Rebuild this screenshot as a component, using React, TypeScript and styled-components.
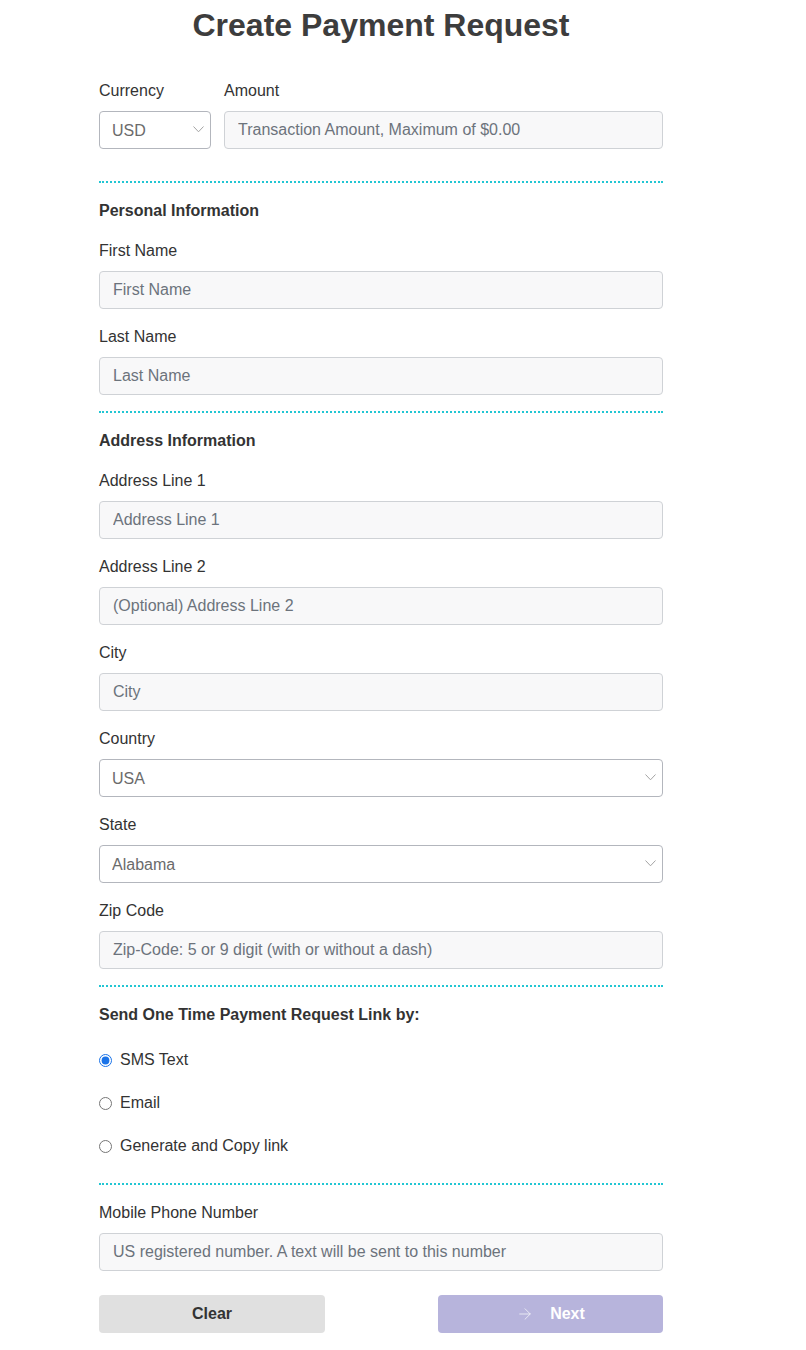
import React, { useState } from "react";
import styled, { createGlobalStyle } from "styled-components";
import { ArrowRight } from "lucide-react";

const GlobalStyle = createGlobalStyle`
  body {
    margin: 0;
    background: #ffffff;
    font-family: "Liberation Sans", Arial, Helvetica, sans-serif;
    color: #333333;
  }
`;

const Page = styled.div`
  width: 564px;
  margin: 0 0 0 99px;
  padding-bottom: 17px;
`;

const Title = styled.h1`
  margin: 6px 0 0;
  font-size: 32px;
  line-height: 38px;
  font-weight: 700;
  text-align: center;
  color: #3d3d3d;
`;

const TopRow = styled.div`
  display: flex;
  gap: 13px;
  margin-top: 35px;
  margin-bottom: 32px;
`;

const Field = styled.div<{ width?: string; grow?: boolean }>`
  display: flex;
  flex-direction: column;
  width: ${(p) => p.width || "auto"};
  flex: ${(p) => (p.grow ? 1 : "none")};
  margin-bottom: ${(p) => (p.width || p.grow ? "0" : "16px")};
`;

const Label = styled.label`
  font-size: 16px;
  line-height: 22px;
  padding-top: 1px;
  color: #333333;
  margin-bottom: 9px;
`;

const Input = styled.input`
  box-sizing: border-box;
  width: 100%;
  height: 38px;
  padding: 0 13px;
  border: 1px solid #cfd2d6;
  border-radius: 4px;
  background: #f8f8f9;
  font-family: "Liberation Sans", Arial, sans-serif;
  font-size: 16px;
  color: #333;
  outline: none;

  &::placeholder {
    color: #6c737c;
  }
`;

const SelectWrap = styled.div`
  position: relative;
  width: 100%;
`;

const Select = styled.select`
  box-sizing: border-box;
  width: 100%;
  height: 38px;
  padding: 0 30px 0 12px;
  border: 1px solid #b3b6bd;
  border-radius: 4px;
  background: #ffffff;
  font-family: "Liberation Sans", Arial, sans-serif;
  font-size: 16px;
  color: #6b6b6b;
  appearance: none;
  -webkit-appearance: none;
  outline: none;
`;

const Chevron = styled.svg`
  position: absolute;
  right: 7px;
  top: 15px;
  pointer-events: none;
`;

const Divider = styled.hr`
  border: 0;
  border-top: 2px dotted #22c6d3;
  margin: 0 0 16px;
  height: 0;
`;

const SectionTitle = styled.div<{ gapBelow?: number }>`
  font-size: 16px;
  line-height: 22px;
  padding-top: 1px;
  font-weight: 700;
  color: #333333;
  margin-bottom: ${(p) => (p.gapBelow ?? 18) - 1}px;
`;

const RadioList = styled.div`
  display: flex;
  flex-direction: column;
  gap: 21px;
  margin-bottom: 26px;
`;

const RadioOption = styled.label`
  display: flex;
  align-items: center;
  gap: 8px;
  font-size: 16px;
  line-height: 22px;
  color: #333333;
`;

const Radio = styled.input`
  width: 13px;
  height: 13px;
  margin: 0;
  accent-color: #1a73e8;
`;

const Buttons = styled.div`
  display: flex;
  justify-content: space-between;
  margin-top: 24px;
`;

const Button = styled.button<{ variant: "clear" | "next" }>`
  width: ${(p) => (p.variant === "clear" ? "226px" : "225px")};
  height: 38px;
  border: 0;
  border-radius: 4px;
  display: flex;
  align-items: center;
  justify-content: center;
  gap: 16px;
  padding: 0;
  font-family: "Liberation Sans", Arial, sans-serif;
  font-size: 16px;
  font-weight: 700;
  background: ${(p) => (p.variant === "clear" ? "#e0e0e0" : "#b7b4dc")};
  color: ${(p) => (p.variant === "clear" ? "#333333" : "#ffffff")};

  svg {
    opacity: 0.85;
  }
`;

function SelectBox({ value, options }: { value: string; options: string[] }) {
  return (
    <SelectWrap>
      <Select defaultValue={value}>
        {options.map((o) => (
          <option key={o}>{o}</option>
        ))}
      </Select>
      <Chevron width="11" height="7" viewBox="0 0 11 7">
        <path d="M0.5 0.5 L5.5 5.8 L10.5 0.5" fill="none" stroke="#a3a3a3" strokeWidth="1" />
      </Chevron>
    </SelectWrap>
  );
}

export default function App() {
  const [method, setMethod] = useState("sms");

  return (
    <>
      <GlobalStyle />
      <Page>
        <Title>Create Payment Request</Title>

        <TopRow>
          <Field width="112px">
            <Label>Currency</Label>
            <SelectBox value="USD" options={["USD"]} />
          </Field>
          <Field grow>
            <Label>Amount</Label>
            <Input placeholder="Transaction Amount, Maximum of $0.00" />
          </Field>
        </TopRow>

        <Divider />
        <SectionTitle>Personal Information</SectionTitle>
        <Field>
          <Label>First Name</Label>
          <Input placeholder="First Name" />
        </Field>
        <Field>
          <Label>Last Name</Label>
          <Input placeholder="Last Name" />
        </Field>

        <Divider />
        <SectionTitle>Address Information</SectionTitle>
        <Field>
          <Label>Address Line 1</Label>
          <Input placeholder="Address Line 1" />
        </Field>
        <Field>
          <Label>Address Line 2</Label>
          <Input placeholder="(Optional) Address Line 2" />
        </Field>
        <Field>
          <Label>City</Label>
          <Input placeholder="City" />
        </Field>
        <Field>
          <Label>Country</Label>
          <SelectBox value="USA" options={["USA"]} />
        </Field>
        <Field>
          <Label>State</Label>
          <SelectBox value="Alabama" options={["Alabama", "Alaska", "Arizona"]} />
        </Field>
        <Field>
          <Label>Zip Code</Label>
          <Input placeholder="Zip-Code: 5 or 9 digit (with or without a dash)" />
        </Field>

        <Divider />
        <SectionTitle gapBelow={24}>Send One Time Payment Request Link by:</SectionTitle>
        <RadioList>
          <RadioOption>
            <Radio type="radio" name="method" checked={method === "sms"} onChange={() => setMethod("sms")} />
            SMS Text
          </RadioOption>
          <RadioOption>
            <Radio type="radio" name="method" checked={method === "email"} onChange={() => setMethod("email")} />
            Email
          </RadioOption>
          <RadioOption>
            <Radio type="radio" name="method" checked={method === "link"} onChange={() => setMethod("link")} />
            Generate and Copy link
          </RadioOption>
        </RadioList>

        <Divider />
        <Field>
          <Label>Mobile Phone Number</Label>
          <Input placeholder="US registered number. A text will be sent to this number" />
        </Field>

        <Buttons>
          <Button variant="clear">Clear</Button>
          <Button variant="next">
            <ArrowRight size={18} strokeWidth={1.1} />
            Next
          </Button>
        </Buttons>
      </Page>
    </>
  );
}
